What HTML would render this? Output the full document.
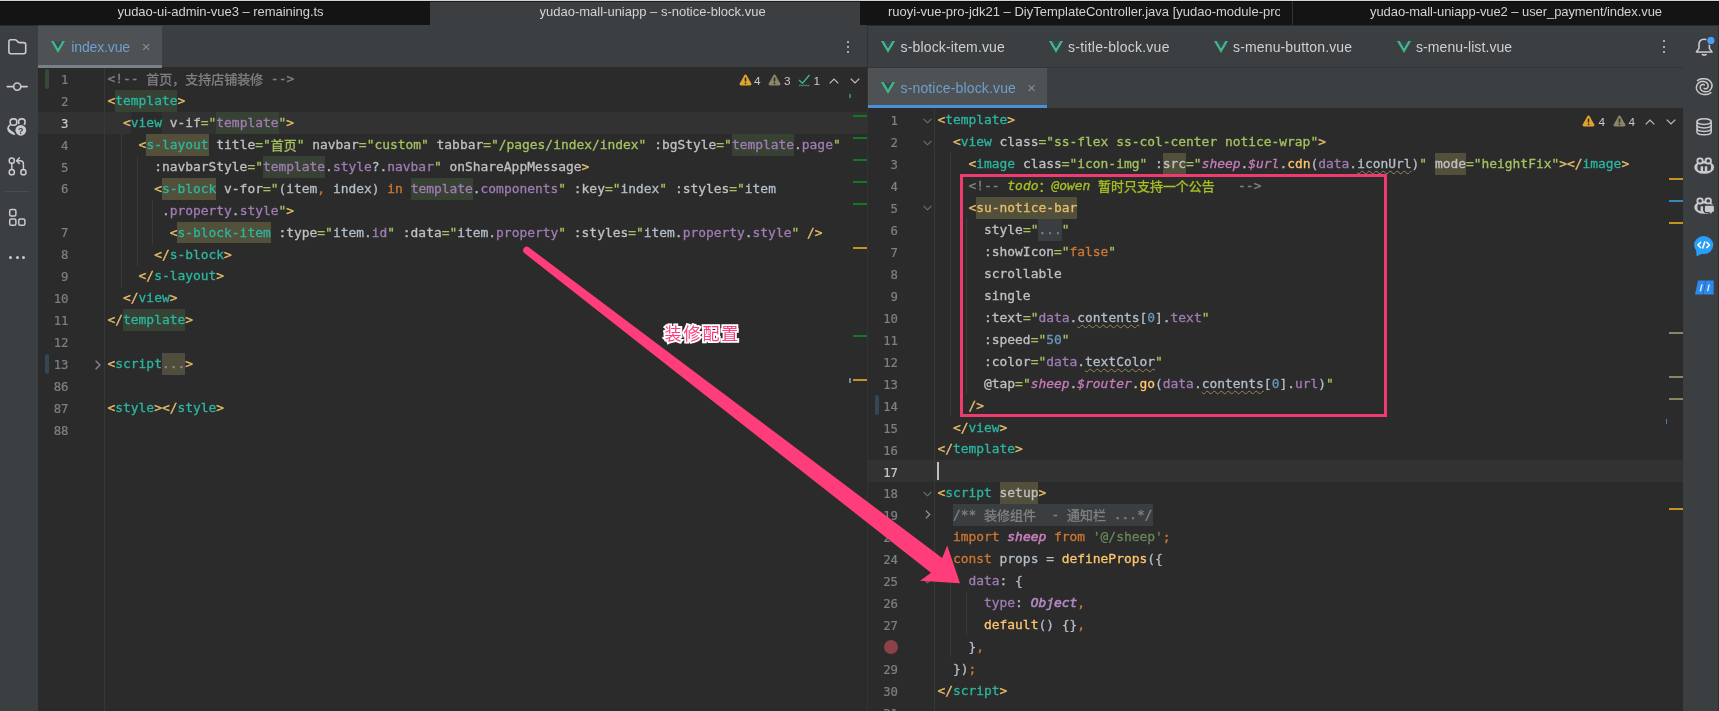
<!DOCTYPE html><html><head><meta charset="utf-8"><title>IDE</title><style>
*{box-sizing:border-box;margin:0;padding:0}
html,body{width:1719px;height:711px;overflow:hidden;background:#2b2b2b}
body{position:relative;font-family:"Liberation Sans","Noto Sans CJK SC",sans-serif;color:#bbb}
div,svg,span.abs{position:absolute}
.titlebar{left:0;top:0;width:1719px;height:25.3px;background:#141414}
.tt{top:0;height:25.5px;line-height:23.5px;font-size:13px;color:#d2d2d2;white-space:nowrap;overflow:hidden}
.side{background:#3c3f41}
.tabbar{background:#3c3f41}
.tab{background:#4e5254}
.tabtxt{font-size:14px;white-space:nowrap;height:20px;line-height:20px;color:#d0d0d0}
.cl{-webkit-text-stroke:0.3px;height:21.95px;line-height:21.95px;white-space:pre;font-family:"DejaVu Sans Mono","Liberation Mono","Noto Sans CJK SC",monospace;font-size:12.92px;color:#a9b7c6}
.ln{width:40px;text-align:right;height:21.95px;line-height:21.95px;font-family:"DejaVu Sans Mono","Liberation Mono","Noto Sans CJK SC",monospace;font-size:12.30px;color:#7d8084;-webkit-text-stroke:0.2px}
.ln.cur{color:#c8c8c8}
.cl span{display:inline-block;height:21.95px;vertical-align:top}
.cj{font-family:"Noto Sans CJK SC",sans-serif;font-size:12.97px}
.b{color:#e8bf6a}.t{color:#2bb6a0}.a{color:#c0c0c0}.s{color:#a5c261}.c{color:#808080}
.p{color:#a07cb4}.w{color:#b4bec9}.k{color:#cc7832}.n{color:#6897bb}.f{color:#ffc66d}
.g{color:#c77dbb;font-style:italic}.gb{-webkit-text-stroke:0.6px}.it{font-style:italic;-webkit-text-stroke:0.6px;color:#b389c5}
.td{color:#a8c023;font-style:italic}.up{font-style:normal}.sj{color:#6a8759}
.hg{background:#374134}.hy{background:#52503a}.hf{background:#3b3e40}.hfb{background:#504e3a;box-shadow:inset 0 0 0 1px #4a4c4e;color:#8c8c8c}
.wv{text-decoration:underline wavy #93895c 1px;text-underline-offset:2px}
.guide{width:1px;background:#3a3a3a}
.mark{height:2px}
</style></head><body><div id="root" style="left:0;top:0;width:1719px;height:711px;overflow:hidden;will-change:transform">
<div class="titlebar"></div>
<div style="left:429.7px;top:0;width:430.3px;height:25.3px;background:#3c3f41"></div>
<div style="left:0;top:1px;width:1719px;height:1px;background:rgba(0,0,0,0.55)"></div>
<div style="left:0;top:0;width:1719px;height:1px;background:#d4d4d4"></div>
<div style="left:1291.5px;top:1px;width:1px;height:24px;background:#333"></div>
<div class="tt" style="left:117.5px;letter-spacing:-0.04px">yudao-ui-admin-vue3 – remaining.ts</div>
<div class="tt" style="left:539.5px">yudao-mall-uniapp – s-notice-block.vue</div>
<div class="tt" style="left:888px;width:391.9px">ruoyi-vue-pro-jdk21 – DiyTemplateController.java [yudao-module-pro</div>
<div class="tt" style="left:1370px;letter-spacing:-0.077px">yudao-mall-uniapp-vue2 – user_payment/index.vue</div>
<div class="side" style="left:0;top:25.5px;width:38px;height:686px"></div>
<svg style="left:7.0px;top:38.0px" width="21" height="18" viewBox="0 0 21 18" ><path d="M1.9 3.6 Q1.9 1.7 3.8 1.7 L8 1.7 Q8.8 1.7 9.4 2.3 L11.2 4.1 Q11.7 4.6 12.5 4.6 L16.8 4.6 Q18.7 4.6 18.7 6.5 L18.7 13.8 Q18.7 15.7 16.8 15.7 L3.8 15.7 Q1.9 15.7 1.9 13.8 Z" fill="none" stroke="#c9cacd" stroke-width="1.6" stroke-linejoin="round"/></svg>
<svg style="left:6.0px;top:80.0px" width="23" height="13" viewBox="0 0 23 13" ><path d="M1.2 6.6 L7.6 6.6 M14.8 6.6 L21.2 6.6" stroke="#c9cacd" stroke-width="1.6" stroke-linecap="round"/><circle cx="11.2" cy="6.6" r="3.6" fill="none" stroke="#c9cacd" stroke-width="1.6"/></svg>
<svg style="left:6.0px;top:117.0px" width="23" height="20" viewBox="0 0 23 20" ><g fill="none" stroke="#c9cacd" stroke-width="1.6" stroke-linecap="round"><rect x="4.2" y="1.9" width="6.6" height="6.4" rx="2.7"/><rect x="12.6" y="1.9" width="6.4" height="6.4" rx="2.7"/><path d="M3.6 8.4 Q1.8 9.8 2 12 Q2.8 15.6 8.4 17.2"/></g><path d="M2.2 10 Q4.2 14 8.2 15.6 L8.2 17.4 Q2.8 15.6 1.8 12 Z" fill="#c9cacd"/><circle cx="14.8" cy="13.3" r="6.6" fill="#3c3f41"/><circle cx="14.8" cy="13.3" r="5.4" fill="#c9cacd"/><text x="14.8" y="16.6" font-family="Liberation Sans,sans-serif" font-size="9" font-weight="bold" text-anchor="middle" fill="#3c3f41">?</text></svg>
<svg style="left:7.0px;top:156.0px" width="22" height="21" viewBox="0 0 22 21" ><g fill="none" stroke="#c9cacd" stroke-width="1.5" stroke-linecap="round" stroke-linejoin="round"><circle cx="4.8" cy="4.7" r="2.6"/><circle cx="4.8" cy="16.2" r="2.6"/><circle cx="16.4" cy="16.2" r="2.6"/><path d="M4.8 7.4 L4.8 13.5"/><path d="M16.4 13.5 L16.4 8 Q16.4 4.7 13.2 4.7 L10 4.7"/><path d="M12.3 1.9 L9.6 4.7 L12.3 7.5"/></g></svg>
<div style="left:5px;top:191.2px;width:24px;height:1px;background:#4b4e51"></div>
<svg style="left:8.0px;top:208.0px" width="19" height="19" viewBox="0 0 19 19" ><g fill="none" stroke="#c9cacd" stroke-width="1.5"><rect x="1.7" y="1.6" width="6.2" height="6.4" rx="1.6"/><rect x="1.7" y="10.9" width="6.2" height="6.4" rx="1.6"/><rect x="10.7" y="10.9" width="6.2" height="6.4" rx="1.6"/></g></svg>
<div style="left:8.8px;top:255.7px;width:3.3px;height:3.3px;border-radius:2px;background:#c9cacd"></div>
<div style="left:15.5px;top:255.7px;width:3.3px;height:3.3px;border-radius:2px;background:#c9cacd"></div>
<div style="left:22.1px;top:255.7px;width:3.3px;height:3.3px;border-radius:2px;background:#c9cacd"></div>
<div class="tabbar" style="left:38px;top:25.3px;width:829px;height:41.9px"></div>
<div class="tab" style="left:38px;top:26px;width:124px;height:41.5px"></div>
<div style="left:38px;top:65px;width:124px;height:2.7px;background:#7a8087"></div>
<svg class="vue" style="left:51.0px;top:40.5px" width="14" height="12" viewBox="0 0 14 12"><path d="M0 0 L7 12 L14 0 L11.2 0 L7 7.2 L2.8 0 Z" fill="#41b883"/><path d="M2.8 0 L7 7.2 L11.2 0 L8.6 0 L7 2.8 L5.4 0 Z" fill="#35495e"/></svg>
<div class="tabtxt" style="left:71.3px;top:37px;color:#6e9fcf;letter-spacing:-0.136px">index.vue</div>
<div class="tabtxt" style="left:141.7px;top:36.5px;color:#8a8d90;font-size:15px">×</div>
<div style="left:846.5px;top:40.5px;width:2px;height:2px;background:#cfcfcf;border-radius:1px"></div>
<div style="left:846.5px;top:45.5px;width:2px;height:2px;background:#cfcfcf;border-radius:1px"></div>
<div style="left:846.5px;top:50.5px;width:2px;height:2px;background:#cfcfcf;border-radius:1px"></div>
<div style="left:38px;top:67.5px;width:829px;height:644px;background:#2b2b2b"></div>
<div style="left:38px;top:112.00px;width:829px;height:21.95px;background:#323232"></div>
<div style="left:131px;top:112.00px;width:30.5px;height:21.95px;background:#2b2b2b"></div>
<div class="guide" style="left:104px;top:67.5px;height:644px;background:#383838"></div>
<div style="left:45px;top:69px;width:4px;height:19.5px;background:#394b37;border-radius:2px"></div>
<div style="left:45px;top:354.1px;width:4px;height:20px;background:#374655;border-radius:2px"></div>
<svg style="left:94px;top:359.6px" width="8" height="10" viewBox="0 0 8 10"><path d="M1.6 0.8 L6 5 L1.6 9.2" fill="none" stroke="#8a8c8f" stroke-width="1.2"/></svg>
<div class="guide" style="left:120.5px;top:133.95px;height:153.65px"></div>
<div class="guide" style="left:136.5px;top:155.90px;height:109.75px"></div>
<div class="guide" style="left:151.8px;top:199.80px;height:43.90px"></div>
<div class="ln" style="left:28.5px;top:69.70px">1</div>
<div class="cl" style="left:107.5px;top:67.90px"><span class="c">&lt;!-- </span><span class="c cj">首页，支持店铺装修</span><span class="c"> --&gt;</span></div>
<div class="ln" style="left:28.5px;top:91.65px">2</div>
<div class="cl" style="left:107.5px;top:89.85px"><span class="b">&lt;</span><span class="t hg">template</span><span class="b">&gt;</span></div>
<div class="ln cur" style="left:28.5px;top:113.60px">3</div>
<div class="cl" style="left:107.5px;top:111.80px">  <span class="b">&lt;</span><span class="t">view</span><span class="a"> v-if</span><span class="s">="</span><span class="p hg">template</span><span class="s">"</span><span class="b">&gt;</span></div>
<div class="ln" style="left:28.5px;top:135.55px">4</div>
<div class="cl" style="left:107.5px;top:133.75px">    <span class="b">&lt;</span><span class="t hy">s-layout</span><span class="a"> title</span><span class="s">="</span><span class="s cj">首页</span><span class="s">"</span><span class="a"> navbar</span><span class="s">="custom"</span><span class="a"> tabbar</span><span class="s">="/pages/index/index"</span><span class="a"> :bgStyle</span><span class="s">="</span><span class="p hg">template</span><span class="w">.</span><span class="p">page</span><span class="s">"</span></div>
<div class="ln" style="left:28.5px;top:157.50px">5</div>
<div class="cl" style="left:107.5px;top:155.70px">      <span class="a">:navbarStyle</span><span class="s">="</span><span class="p hg">template</span><span class="w">.</span><span class="p">style</span><span class="w">?.</span><span class="p">navbar</span><span class="s">"</span><span class="a"> onShareAppMessage</span><span class="b">&gt;</span></div>
<div class="ln" style="left:28.5px;top:179.45px">6</div>
<div class="cl" style="left:107.5px;top:177.65px">      <span class="b">&lt;</span><span class="t hy">s-block</span><span class="a"> v-for</span><span class="s">="</span><span class="w">(item</span><span class="k">,</span><span class="w"> index) </span><span class="k">in</span><span class="w"> </span><span class="p hg">template</span><span class="w">.</span><span class="p">components</span><span class="s">"</span><span class="a"> :key</span><span class="s">="</span><span class="w">index</span><span class="s">"</span><span class="a"> :styles</span><span class="s">="</span><span class="w">item</span></div>
<div class="cl" style="left:107.5px;top:199.60px">       <span class="w">.</span><span class="p">property</span><span class="w">.</span><span class="p">style</span><span class="s">"</span><span class="b">&gt;</span></div>
<div class="ln" style="left:28.5px;top:223.35px">7</div>
<div class="cl" style="left:107.5px;top:221.55px">        <span class="b">&lt;</span><span class="t hy">s-block-item</span><span class="a"> :type</span><span class="s">="</span><span class="w">item.</span><span class="p">id</span><span class="s">"</span><span class="a"> :data</span><span class="s">="</span><span class="w">item.</span><span class="p">property</span><span class="s">"</span><span class="a"> :styles</span><span class="s">="</span><span class="w">item.</span><span class="p">property</span><span class="w">.</span><span class="p">style</span><span class="s">"</span><span class="b"> /&gt;</span></div>
<div class="ln" style="left:28.5px;top:245.30px">8</div>
<div class="cl" style="left:107.5px;top:243.50px">      <span class="b">&lt;/</span><span class="t">s-block</span><span class="b">&gt;</span></div>
<div class="ln" style="left:28.5px;top:267.25px">9</div>
<div class="cl" style="left:107.5px;top:265.45px">    <span class="b">&lt;/</span><span class="t">s-layout</span><span class="b">&gt;</span></div>
<div class="ln" style="left:28.5px;top:289.20px">10</div>
<div class="cl" style="left:107.5px;top:287.40px">  <span class="b">&lt;/</span><span class="t">view</span><span class="b">&gt;</span></div>
<div class="ln" style="left:28.5px;top:311.15px">11</div>
<div class="cl" style="left:107.5px;top:309.35px"><span class="b">&lt;/</span><span class="t hg">template</span><span class="b">&gt;</span></div>
<div class="ln" style="left:28.5px;top:333.10px">12</div>
<div class="ln" style="left:28.5px;top:355.05px">13</div>
<div class="cl" style="left:107.5px;top:353.25px"><span class="b">&lt;</span><span class="t">script</span><span class="c hfb">...</span><span class="b">&gt;</span></div>
<div class="ln" style="left:28.5px;top:377.00px">86</div>
<div class="ln" style="left:28.5px;top:398.95px">87</div>
<div class="cl" style="left:107.5px;top:397.15px"><span class="b">&lt;</span><span class="t">style</span><span class="b">&gt;&lt;/</span><span class="t">style</span><span class="b">&gt;</span></div>
<div class="ln" style="left:28.5px;top:420.90px">88</div>
<svg style="left:738.5px;top:74.3px" width="13" height="12" viewBox="0 0 13 12"><path d="M6.5 0.6 Q7.3 0.6 7.8 1.5 L12.3 9.6 Q13 11.4 11.2 11.4 L1.8 11.4 Q0 11.4 0.7 9.6 L5.2 1.5 Q5.7 0.6 6.5 0.6 Z" fill="#e0a32e"/><rect x="5.7" y="3.4" width="1.6" height="4.2" rx="0.6" fill="#2b2b2b"/><rect x="5.7" y="8.6" width="1.6" height="1.6" rx="0.6" fill="#2b2b2b"/></svg>
<div class="tabtxt" style="left:754px;top:71.2px;font-size:11.8px;color:#c8c8c8">4</div>
<svg style="left:768.3px;top:74.3px" width="13" height="12" viewBox="0 0 13 12"><path d="M6.5 0.6 Q7.3 0.6 7.8 1.5 L12.3 9.6 Q13 11.4 11.2 11.4 L1.8 11.4 Q0 11.4 0.7 9.6 L5.2 1.5 Q5.7 0.6 6.5 0.6 Z" fill="#8a8468"/><rect x="5.7" y="3.4" width="1.6" height="4.2" rx="0.6" fill="#2b2b2b"/><rect x="5.7" y="8.6" width="1.6" height="1.6" rx="0.6" fill="#2b2b2b"/></svg>
<div class="tabtxt" style="left:784px;top:71.2px;font-size:11.8px;color:#c8c8c8">3</div>
<svg style="left:798px;top:74px" width="13" height="14" viewBox="0 0 13 14"><path d="M1 6 L4.5 9.2 L11.5 1" fill="none" stroke="#3fb28a" stroke-width="1.4"/><path d="M1 12 L2.5 11 L4 12 L5.5 11 L7 12 L8.5 11 L10 12 L11.5 11" fill="none" stroke="#3fb28a" stroke-width="0.9"/></svg>
<div class="tabtxt" style="left:813.5px;top:71.2px;font-size:11.8px;color:#c8c8c8">1</div>
<svg style="left:828.8px;top:77.5px" width="10" height="6" viewBox="0 0 10 6"><path d="M0.7 5.3 L5 1 L9.3 5.3" fill="none" stroke="#c0c0c0" stroke-width="1.2"/></svg>
<svg style="left:849.8px;top:78.0px" width="10" height="6" viewBox="0 0 10 6"><path d="M0.7 0.7 L5 5 L9.3 0.7" fill="none" stroke="#c0c0c0" stroke-width="1.2"/></svg>
<div style="left:848.6px;top:93.7px;width:2.2px;height:4px;background:#3a8058"></div>
<div class="mark" style="left:852.5px;top:115.4px;width:14.5px;background:#0f7a22"></div>
<div class="mark" style="left:852.5px;top:137.4px;width:14.5px;background:#0f7a22"></div>
<div class="mark" style="left:852.5px;top:159.4px;width:14.5px;background:#0f7a22"></div>
<div class="mark" style="left:852.5px;top:181.4px;width:14.5px;background:#0f7a22"></div>
<div class="mark" style="left:852.5px;top:203.4px;width:14.5px;background:#0f7a22"></div>
<div class="mark" style="left:852.5px;top:247.2px;width:14.5px;background:#c8921e"></div>
<div class="mark" style="left:852.5px;top:335.4px;width:14.5px;background:#0f7a22"></div>
<div class="mark" style="left:852.5px;top:379.2px;width:14.5px;background:#c8921e"></div>
<div style="left:848.7px;top:377.8px;width:2px;height:5px;background:#7a8494"></div>
<div style="left:867px;top:25.5px;width:1px;height:686px;background:#323232"></div>
<div class="tabbar" style="left:868px;top:25.5px;width:815px;height:83px"></div>
<div style="left:868px;top:66.5px;width:815px;height:1px;background:#333638"></div>
<div class="tab" style="left:868px;top:68px;width:179px;height:40.5px"></div>
<div style="left:868px;top:105.2px;width:179px;height:3.7px;background:#4a90d9"></div>
<svg class="vue" style="left:881.0px;top:40.5px" width="14" height="12" viewBox="0 0 14 12"><path d="M0 0 L7 12 L14 0 L11.2 0 L7 7.2 L2.8 0 Z" fill="#41b883"/><path d="M2.8 0 L7 7.2 L11.2 0 L8.6 0 L7 2.8 L5.4 0 Z" fill="#35495e"/></svg>
<div class="tabtxt" style="left:900.5px;top:37px;letter-spacing:0.162px">s-block-item.vue</div>
<svg class="vue" style="left:1048.5px;top:40.5px" width="14" height="12" viewBox="0 0 14 12"><path d="M0 0 L7 12 L14 0 L11.2 0 L7 7.2 L2.8 0 Z" fill="#41b883"/><path d="M2.8 0 L7 7.2 L11.2 0 L8.6 0 L7 2.8 L5.4 0 Z" fill="#35495e"/></svg>
<div class="tabtxt" style="left:1068.0px;top:37px;letter-spacing:0.262px">s-title-block.vue</div>
<svg class="vue" style="left:1213.5px;top:40.5px" width="14" height="12" viewBox="0 0 14 12"><path d="M0 0 L7 12 L14 0 L11.2 0 L7 7.2 L2.8 0 Z" fill="#41b883"/><path d="M2.8 0 L7 7.2 L11.2 0 L8.6 0 L7 2.8 L5.4 0 Z" fill="#35495e"/></svg>
<div class="tabtxt" style="left:1233.0px;top:37px;letter-spacing:0.146px">s-menu-button.vue</div>
<svg class="vue" style="left:1397.0px;top:40.5px" width="14" height="12" viewBox="0 0 14 12"><path d="M0 0 L7 12 L14 0 L11.2 0 L7 7.2 L2.8 0 Z" fill="#41b883"/><path d="M2.8 0 L7 7.2 L11.2 0 L8.6 0 L7 2.8 L5.4 0 Z" fill="#35495e"/></svg>
<div class="tabtxt" style="left:1416.0px;top:37px;letter-spacing:0.086px">s-menu-list.vue</div>
<svg class="vue" style="left:881.0px;top:81.5px" width="14" height="12" viewBox="0 0 14 12"><path d="M0 0 L7 12 L14 0 L11.2 0 L7 7.2 L2.8 0 Z" fill="#41b883"/><path d="M2.8 0 L7 7.2 L11.2 0 L8.6 0 L7 2.8 L5.4 0 Z" fill="#35495e"/></svg>
<div class="tabtxt" style="left:900.5px;top:78px;color:#6e9fcf;letter-spacing:0.149px">s-notice-block.vue</div>
<div class="tabtxt" style="left:1027.2px;top:77.5px;color:#8a8d90;font-size:15px">×</div>
<div style="left:1662.7px;top:40.0px;width:2px;height:2px;background:#cfcfcf;border-radius:1px"></div>
<div style="left:1662.7px;top:45.7px;width:2px;height:2px;background:#cfcfcf;border-radius:1px"></div>
<div style="left:1662.7px;top:51.3px;width:2px;height:2px;background:#cfcfcf;border-radius:1px"></div>
<div style="left:868px;top:108.4px;width:815px;height:603px;background:#2b2b2b"></div>
<div style="left:868px;top:459.90px;width:815px;height:21.95px;background:#323232"></div>
<div class="guide" style="left:934.3px;top:108.7px;height:603px;background:#383838"></div>
<div class="guide" style="left:950.3px;top:152.60px;height:263.40px"></div>
<div class="guide" style="left:966.0px;top:218.45px;height:175.60px"></div>
<div class="guide" style="left:950.3px;top:569.65px;height:87.80px"></div>
<div class="guide" style="left:966.0px;top:591.60px;height:43.90px"></div>
<div class="ln" style="left:858.0px;top:111.30px">1</div>
<div class="cl" style="left:937.4px;top:109.20px"><span class="b">&lt;</span><span class="t">template</span><span class="b">&gt;</span></div>
<div class="ln" style="left:858.0px;top:133.25px">2</div>
<div class="cl" style="left:937.4px;top:131.15px">  <span class="b">&lt;</span><span class="t">view</span><span class="a"> class</span><span class="s">="ss-flex ss-col-center notice-wrap"</span><span class="b">&gt;</span></div>
<div class="ln" style="left:858.0px;top:155.20px">3</div>
<div class="cl" style="left:937.4px;top:153.10px">    <span class="b">&lt;</span><span class="t">image</span><span class="a"> class</span><span class="s">="icon-img"</span><span class="a"> :</span><span class="a hy">src</span><span class="s">="</span><span class="g">sheep</span><span class="w">.</span><span class="g">$url</span><span class="w">.</span><span class="f">cdn</span><span class="w">(</span><span class="p">data</span><span class="w">.</span><span class="w wv">iconUrl</span><span class="w">)</span><span class="s">"</span><span class="a"> </span><span class="a hy">mode</span><span class="s">="heightFix"</span><span class="b">&gt;&lt;/</span><span class="t">image</span><span class="b">&gt;</span></div>
<div class="ln" style="left:858.0px;top:177.15px">4</div>
<div class="cl" style="left:937.4px;top:175.05px">    <span class="c">&lt;!-- </span><span class="td">todo</span><span class="td cj up">：</span><span class="td">@owen </span><span class="td cj up">暂时只支持一个公告</span><span class="c">   --&gt;</span></div>
<div class="ln" style="left:858.0px;top:199.10px">5</div>
<div class="cl" style="left:937.4px;top:197.00px">    <span class="b">&lt;</span><span class="b hy">su-notice-bar</span></div>
<div class="ln" style="left:858.0px;top:221.05px">6</div>
<div class="cl" style="left:937.4px;top:218.95px">      <span class="a">style</span><span class="s">="</span><span class="c hf">...</span><span class="s">"</span></div>
<div class="ln" style="left:858.0px;top:243.00px">7</div>
<div class="cl" style="left:937.4px;top:240.90px">      <span class="a">:showIcon</span><span class="s">="</span><span class="k">false</span><span class="s">"</span></div>
<div class="ln" style="left:858.0px;top:264.95px">8</div>
<div class="cl" style="left:937.4px;top:262.85px">      <span class="a">scrollable</span></div>
<div class="ln" style="left:858.0px;top:286.90px">9</div>
<div class="cl" style="left:937.4px;top:284.80px">      <span class="a">single</span></div>
<div class="ln" style="left:858.0px;top:308.85px">10</div>
<div class="cl" style="left:937.4px;top:306.75px">      <span class="a">:text</span><span class="s">="</span><span class="p">data</span><span class="w">.</span><span class="w wv">contents</span><span class="w">[</span><span class="n">0</span><span class="w">].</span><span class="p">text</span><span class="s">"</span></div>
<div class="ln" style="left:858.0px;top:330.80px">11</div>
<div class="cl" style="left:937.4px;top:328.70px">      <span class="a">:speed</span><span class="s">="</span><span class="n">50</span><span class="s">"</span></div>
<div class="ln" style="left:858.0px;top:352.75px">12</div>
<div class="cl" style="left:937.4px;top:350.65px">      <span class="a">:color</span><span class="s">="</span><span class="p">data</span><span class="w">.</span><span class="w wv">textColor</span><span class="s">"</span></div>
<div class="ln" style="left:858.0px;top:374.70px">13</div>
<div class="cl" style="left:937.4px;top:372.60px">      <span class="a">@tap</span><span class="s">="</span><span class="g">sheep</span><span class="w">.</span><span class="g">$router</span><span class="w">.</span><span class="f">go</span><span class="w">(</span><span class="p">data</span><span class="w">.</span><span class="w wv">contents</span><span class="w">[</span><span class="n">0</span><span class="w">].</span><span class="p">url</span><span class="w">)</span><span class="s">"</span></div>
<div class="ln" style="left:858.0px;top:396.65px">14</div>
<div class="cl" style="left:937.4px;top:394.55px">    <span class="b">/&gt;</span></div>
<div class="ln" style="left:858.0px;top:418.60px">15</div>
<div class="cl" style="left:937.4px;top:416.50px">  <span class="b">&lt;/</span><span class="t">view</span><span class="b">&gt;</span></div>
<div class="ln" style="left:858.0px;top:440.55px">16</div>
<div class="cl" style="left:937.4px;top:438.45px"><span class="b">&lt;/</span><span class="t">template</span><span class="b">&gt;</span></div>
<div class="ln cur" style="left:858.0px;top:462.50px">17</div>
<div class="ln" style="left:858.0px;top:484.45px">18</div>
<div class="cl" style="left:937.4px;top:482.35px"><span class="b">&lt;</span><span class="t">script</span><span class="a"> </span><span class="a hy">setup</span><span class="b">&gt;</span></div>
<div class="ln" style="left:858.0px;top:506.40px">19</div>
<div class="cl" style="left:937.4px;top:504.30px">  <span class="c hf">/** </span><span class="c hf cj">装修组件</span><span class="c hf">  - </span><span class="c hf cj">通知栏</span><span class="c hf"> ...*/</span></div>
<div class="ln" style="left:858.0px;top:528.35px">23</div>
<div class="cl" style="left:937.4px;top:526.25px">  <span class="k">import </span><span class="g gb">sheep</span><span class="k"> from </span><span class="sj">'@/sheep'</span><span class="k">;</span></div>
<div class="ln" style="left:858.0px;top:550.30px">24</div>
<div class="cl" style="left:937.4px;top:548.20px">  <span class="k">const </span><span class="w">props = </span><span class="f">defineProps</span><span class="w">({</span></div>
<div class="ln" style="left:858.0px;top:572.25px">25</div>
<div class="cl" style="left:937.4px;top:570.15px">    <span class="p">data</span><span class="w">: {</span></div>
<div class="ln" style="left:858.0px;top:594.20px">26</div>
<div class="cl" style="left:937.4px;top:592.10px">      <span class="p">type</span><span class="w">: </span><span class="p it">Object</span><span class="k">,</span></div>
<div class="ln" style="left:858.0px;top:616.15px">27</div>
<div class="cl" style="left:937.4px;top:614.05px">      <span class="f">default</span><span class="w">() {}</span><span class="k">,</span></div>
<div class="cl" style="left:937.4px;top:636.00px">    <span class="w">}</span><span class="k">,</span></div>
<div class="ln" style="left:858.0px;top:660.05px">29</div>
<div class="cl" style="left:937.4px;top:657.95px">  <span class="w">})</span><span class="k">;</span></div>
<div class="ln" style="left:858.0px;top:682.00px">30</div>
<div class="cl" style="left:937.4px;top:679.90px"><span class="b">&lt;/</span><span class="t">script</span><span class="b">&gt;</span></div>
<div class="ln" style="left:858.0px;top:703.95px">31</div>
<div style="left:937px;top:462.2px;width:2px;height:17.5px;background:#c0c0c0"></div>
<div style="left:875px;top:394.7px;width:4px;height:20px;background:#374655;border-radius:2px"></div>
<svg style="left:923px;top:117.5px" width="9" height="6" viewBox="0 0 9 6"><path d="M0.6 0.8 L4.5 4.8 L8.4 0.8" fill="none" stroke="#6e7175" stroke-width="1.1"/></svg>
<svg style="left:923px;top:139.5px" width="9" height="6" viewBox="0 0 9 6"><path d="M0.6 0.8 L4.5 4.8 L8.4 0.8" fill="none" stroke="#6e7175" stroke-width="1.1"/></svg>
<svg style="left:923px;top:205.3px" width="9" height="6" viewBox="0 0 9 6"><path d="M0.6 0.8 L4.5 4.8 L8.4 0.8" fill="none" stroke="#6e7175" stroke-width="1.1"/></svg>
<svg style="left:923px;top:490.6px" width="9" height="6" viewBox="0 0 9 6"><path d="M0.6 0.8 L4.5 4.8 L8.4 0.8" fill="none" stroke="#6e7175" stroke-width="1.1"/></svg>
<svg style="left:923px;top:578.4px" width="9" height="6" viewBox="0 0 9 6"><path d="M0.6 0.8 L4.5 4.8 L8.4 0.8" fill="none" stroke="#6e7175" stroke-width="1.1"/></svg>
<svg style="left:925px;top:510.3px" width="6" height="9" viewBox="0 0 6 9"><path d="M0.8 0.6 L4.8 4.5 L0.8 8.4" fill="none" stroke="#9a9da1" stroke-width="1.1"/></svg>
<div style="left:883.5px;top:639.7px;width:14px;height:14px;border-radius:7px;background:#8b4147"></div>
<svg style="left:1582.3px;top:115.3px" width="13" height="12" viewBox="0 0 13 12"><path d="M6.5 0.6 Q7.3 0.6 7.8 1.5 L12.3 9.6 Q13 11.4 11.2 11.4 L1.8 11.4 Q0 11.4 0.7 9.6 L5.2 1.5 Q5.7 0.6 6.5 0.6 Z" fill="#e0a32e"/><rect x="5.7" y="3.4" width="1.6" height="4.2" rx="0.6" fill="#2b2b2b"/><rect x="5.7" y="8.6" width="1.6" height="1.6" rx="0.6" fill="#2b2b2b"/></svg>
<div class="tabtxt" style="left:1598.5px;top:112.2px;font-size:11.8px;color:#c8c8c8">4</div>
<svg style="left:1612.8px;top:115.3px" width="13" height="12" viewBox="0 0 13 12"><path d="M6.5 0.6 Q7.3 0.6 7.8 1.5 L12.3 9.6 Q13 11.4 11.2 11.4 L1.8 11.4 Q0 11.4 0.7 9.6 L5.2 1.5 Q5.7 0.6 6.5 0.6 Z" fill="#8a8468"/><rect x="5.7" y="3.4" width="1.6" height="4.2" rx="0.6" fill="#2b2b2b"/><rect x="5.7" y="8.6" width="1.6" height="1.6" rx="0.6" fill="#2b2b2b"/></svg>
<div class="tabtxt" style="left:1628.5px;top:112.2px;font-size:11.8px;color:#c8c8c8">4</div>
<svg style="left:1645.0px;top:118.5px" width="10" height="6" viewBox="0 0 10 6"><path d="M0.7 5.3 L5 1 L9.3 5.3" fill="none" stroke="#c0c0c0" stroke-width="1.2"/></svg>
<svg style="left:1665.7px;top:119.0px" width="10" height="6" viewBox="0 0 10 6"><path d="M0.7 0.7 L5 5 L9.3 0.7" fill="none" stroke="#c0c0c0" stroke-width="1.2"/></svg>
<div class="mark" style="left:1669px;top:178.0px;width:14px;background:#c8921e"></div>
<div class="mark" style="left:1669px;top:200.4px;width:14px;background:#3b86b8"></div>
<div class="mark" style="left:1669px;top:221.8px;width:14px;background:#c8921e"></div>
<div class="mark" style="left:1669px;top:332.1px;width:14px;background:#8c8564"></div>
<div class="mark" style="left:1669px;top:376.0px;width:14px;background:#8c8564"></div>
<div class="mark" style="left:1669px;top:398.2px;width:14px;background:#8c8564"></div>
<div class="mark" style="left:1669px;top:508.0px;width:14px;background:#c8921e"></div>
<div style="left:1665.6px;top:419px;width:1.6px;height:5px;background:#4a7fb5"></div>
<div style="left:960.2px;top:174.1px;width:427.2px;height:243px;border:3.5px solid #ee3b70"></div>
<div class="side" style="left:1683px;top:25.5px;width:36px;height:686px"></div>
<div style="left:1717.5px;top:25.5px;width:1.5px;height:686px;background:#2d2f30"></div>
<svg style="left:1694.0px;top:37.0px" width="22" height="20" viewBox="0 0 22 20" ><path d="M2.4 15 L5 11.4 L5 7.6 Q5 2.2 10.2 2.2 Q15.4 2.2 15.4 7.6 L15.4 11.4 L18 15 Z" fill="none" stroke="#c9cacd" stroke-width="1.6" stroke-linejoin="round"/><path d="M8.4 17.5 Q10.2 18.6 12 17.5" fill="none" stroke="#c9cacd" stroke-width="1.5" stroke-linecap="round"/><circle cx="16.9" cy="3.4" r="4.6" fill="#3c3f41"/><circle cx="16.9" cy="3.4" r="3.6" fill="#4a9ff5"/></svg>
<svg style="left:1694.0px;top:77.0px" width="21" height="20" viewBox="0 0 21 20" ><path d="M3.51 3.58 L4.28 3.02 L5.09 2.56 L5.93 2.20 L6.78 1.93 L7.65 1.75 L8.52 1.68 L9.37 1.69 L10.20 1.80 L10.97 1.81 L11.73 1.90 L12.49 2.06 L13.22 2.30 L13.94 2.61 L14.62 2.99 L15.26 3.44 L15.86 3.94 L16.26 4.38 L16.63 4.84 L16.97 5.33 L17.26 5.84 L17.52 6.38 L17.74 6.93 L17.92 7.50 L18.05 8.07 L17.99 8.97 L17.82 9.83 L17.56 10.65 L17.22 11.42 L16.80 12.12 L16.31 12.75 L15.77 13.30 L15.18 13.78 L14.59 14.14 L13.97 14.43 L13.35 14.64 L12.72 14.77 L12.10 14.83 L11.50 14.82 L10.92 14.74 L10.37 14.60 L9.81 14.51 L9.27 14.36 L8.76 14.15 L8.29 13.89 L7.85 13.59 L7.46 13.23 L7.12 12.85 L6.83 12.43 L6.61 12.00 L6.45 11.55 L6.34 11.10 L6.29 10.65 L6.28 10.20 L6.33 9.77 L6.42 9.35 L6.56 8.96 L6.76 8.64 L6.98 8.35 L7.23 8.10 L7.50 7.88 L7.78 7.70 L8.07 7.56 L8.36 7.46 L8.65 7.39 L8.92 7.38 L9.18 7.40 L9.42 7.45 L9.64 7.52 L9.85 7.62 L10.04 7.73 L10.20 7.86 L10.34 8.01" fill="none" stroke="#c9cacd" stroke-width="1.5" stroke-linecap="round" stroke-linejoin="round"/><path d="M16.89 15.62 L16.12 16.18 L15.31 16.64 L14.48 17.00 L13.62 17.27 L12.75 17.45 L11.88 17.52 L11.03 17.51 L10.20 17.40 L9.43 17.39 L8.67 17.30 L7.91 17.14 L7.18 16.90 L6.46 16.59 L5.78 16.21 L5.14 15.76 L4.54 15.26 L4.14 14.82 L3.77 14.36 L3.43 13.87 L3.14 13.36 L2.88 12.82 L2.66 12.27 L2.48 11.70 L2.35 11.13 L2.41 10.23 L2.58 9.37 L2.84 8.55 L3.18 7.78 L3.60 7.08 L4.09 6.45 L4.63 5.90 L5.22 5.42 L5.81 5.06 L6.43 4.77 L7.05 4.56 L7.68 4.43 L8.30 4.37 L8.90 4.38 L9.48 4.46 L10.03 4.60 L10.59 4.69 L11.13 4.84 L11.64 5.05 L12.11 5.31 L12.55 5.61 L12.94 5.97 L13.28 6.35 L13.57 6.77 L13.79 7.20 L13.95 7.65 L14.06 8.10 L14.11 8.55 L14.12 9.00 L14.07 9.43 L13.98 9.85 L13.84 10.24 L13.64 10.56 L13.42 10.85 L13.17 11.10 L12.90 11.32 L12.62 11.50 L12.33 11.64 L12.04 11.74 L11.75 11.81 L11.48 11.82 L11.22 11.80 L10.98 11.75 L10.76 11.68 L10.55 11.58 L10.36 11.47 L10.20 11.34 L10.06 11.19" fill="none" stroke="#c9cacd" stroke-width="1.5" stroke-linecap="round" stroke-linejoin="round"/></svg>
<svg style="left:1694.0px;top:117.0px" width="21" height="20" viewBox="0 0 21 20" ><g fill="none" stroke="#c9cacd" stroke-width="1.5"><ellipse cx="10.1" cy="4.6" rx="7.1" ry="2.8"/><path d="M3 4.6 L3 15 Q3 17.8 10.1 17.8 Q17.2 17.8 17.2 15 L17.2 4.6"/><path d="M3 8.1 Q3 10.9 10.1 10.9 Q17.2 10.9 17.2 8.1"/><path d="M3 11.6 Q3 14.4 10.1 14.4 Q17.2 14.4 17.2 11.6"/></g></svg>
<svg style="left:1693.0px;top:156.0px" width="22" height="19" viewBox="0 0 22 19" ><ellipse cx="11.2" cy="11.4" rx="9.9" ry="6.4" fill="#c9cacd"/><rect x="4.4" y="7.6" width="13.6" height="7.3" rx="3.2" fill="#3c3f41"/><rect x="7.6" y="10.2" width="2.5" height="4.8" rx="0.6" fill="#c9cacd"/><rect x="11.8" y="10.2" width="2.5" height="4.8" rx="0.6" fill="#c9cacd"/><rect x="3.5" y="1.5" width="7" height="6.9" rx="3.1" fill="#c9cacd"/><rect x="11.6" y="1.5" width="7.2" height="6.9" rx="3.1" fill="#c9cacd"/><rect x="5.3" y="3.3" width="3.5" height="3.3" rx="1.5" fill="#3c3f41"/><rect x="13.5" y="3.3" width="3.5" height="3.3" rx="1.5" fill="#3c3f41"/></svg>
<svg style="left:1693.0px;top:196.2px" width="23" height="21" viewBox="0 0 23 21" ><ellipse cx="11.2" cy="11.4" rx="9.9" ry="6.4" fill="#c9cacd"/><rect x="4.4" y="7.6" width="13.6" height="7.3" rx="3.2" fill="#3c3f41"/><rect x="7.6" y="10.2" width="2.5" height="4.8" rx="0.6" fill="#c9cacd"/><rect x="11.8" y="10.2" width="2.5" height="4.8" rx="0.6" fill="#c9cacd"/><rect x="3.5" y="1.5" width="7" height="6.9" rx="3.1" fill="#c9cacd"/><rect x="11.6" y="1.5" width="7.2" height="6.9" rx="3.1" fill="#c9cacd"/><rect x="5.3" y="3.3" width="3.5" height="3.3" rx="1.5" fill="#3c3f41"/><rect x="13.5" y="3.3" width="3.5" height="3.3" rx="1.5" fill="#3c3f41"/><path d="M12.4 8.4 L20.2 8.4 Q22 8.4 22 10.2 L22 15.2 Q22 17 20.2 17 L19.6 17 L18.4 19.6 L15.8 17 L12.4 17 Q10.6 17 10.6 15.2 L10.6 10.2 Q10.6 8.4 12.4 8.4 Z" fill="#3c3f41"/><path d="M13 9.7 L19.8 9.7 Q20.9 9.7 20.9 10.8 L20.9 14.8 Q20.9 15.9 19.8 15.9 L18.9 15.9 L18.1 17.9 L16.2 15.9 L13 15.9 Q11.9 15.9 11.9 14.8 L11.9 10.8 Q11.9 9.7 13 9.7 Z" fill="#c9cacd"/></svg>
<svg style="left:1693.0px;top:235.0px" width="22" height="23" viewBox="0 0 22 23" ><ellipse cx="10.7" cy="10.1" rx="9.6" ry="9" fill="#27a0fa"/><path d="M3.2 15 L3.6 21.2 L9.6 18.6 Z" fill="#27a0fa"/><g fill="none" stroke="#fff" stroke-width="1.5" stroke-linecap="round" stroke-linejoin="round"><path d="M7.6 7.4 L4.9 10 L7.6 12.6"/><path d="M13.8 7.4 L16.5 10 L13.8 12.6"/><path d="M11.7 7 L9.7 13"/></g></svg>
<svg style="left:1693.0px;top:278.0px" width="23" height="19" viewBox="0 0 23 19" ><g filter="url(#blr)"><path d="M5 2.4 L12.6 2.4 L9.8 16.4 L2 16.4 Z" fill="#2a8af0"/><path d="M13 2.4 L20.6 2.4 L20.6 16.4 L10.2 16.4 Z" fill="#2a8af0"/><path d="M8.2 6.4 L9.6 6.4 L8 13.2 L6.6 13.2 Z" fill="#e8eef8"/><path d="M15.4 6.4 L16.8 6.4 L15.4 13.2 L14 13.2 Z" fill="#e8eef8"/></g><defs><filter id="blr"><feGaussianBlur stdDeviation="0.75"/></filter></defs></svg>
<svg style="left:0;top:0" width="1719" height="711" viewBox="0 0 1719 711"><path d="M529.0 247.4 L942.2 558.0 L947.2 545.5 L960.0 583.3 L920.1 580.7 L931.0 572.7 L524.6 253.2 A3.6 3.6 0 0 1 529.0 247.4 Z" fill="#ff3d7a"/></svg>
<div style="left:664.6px;top:322.5px;font-size:17px;line-height:24px;font-weight:normal;color:#ff3f7c;-webkit-text-stroke:3.6px #fff;paint-order:stroke fill;letter-spacing:1.9px;white-space:nowrap">装修配置</div>
</div></body></html>
